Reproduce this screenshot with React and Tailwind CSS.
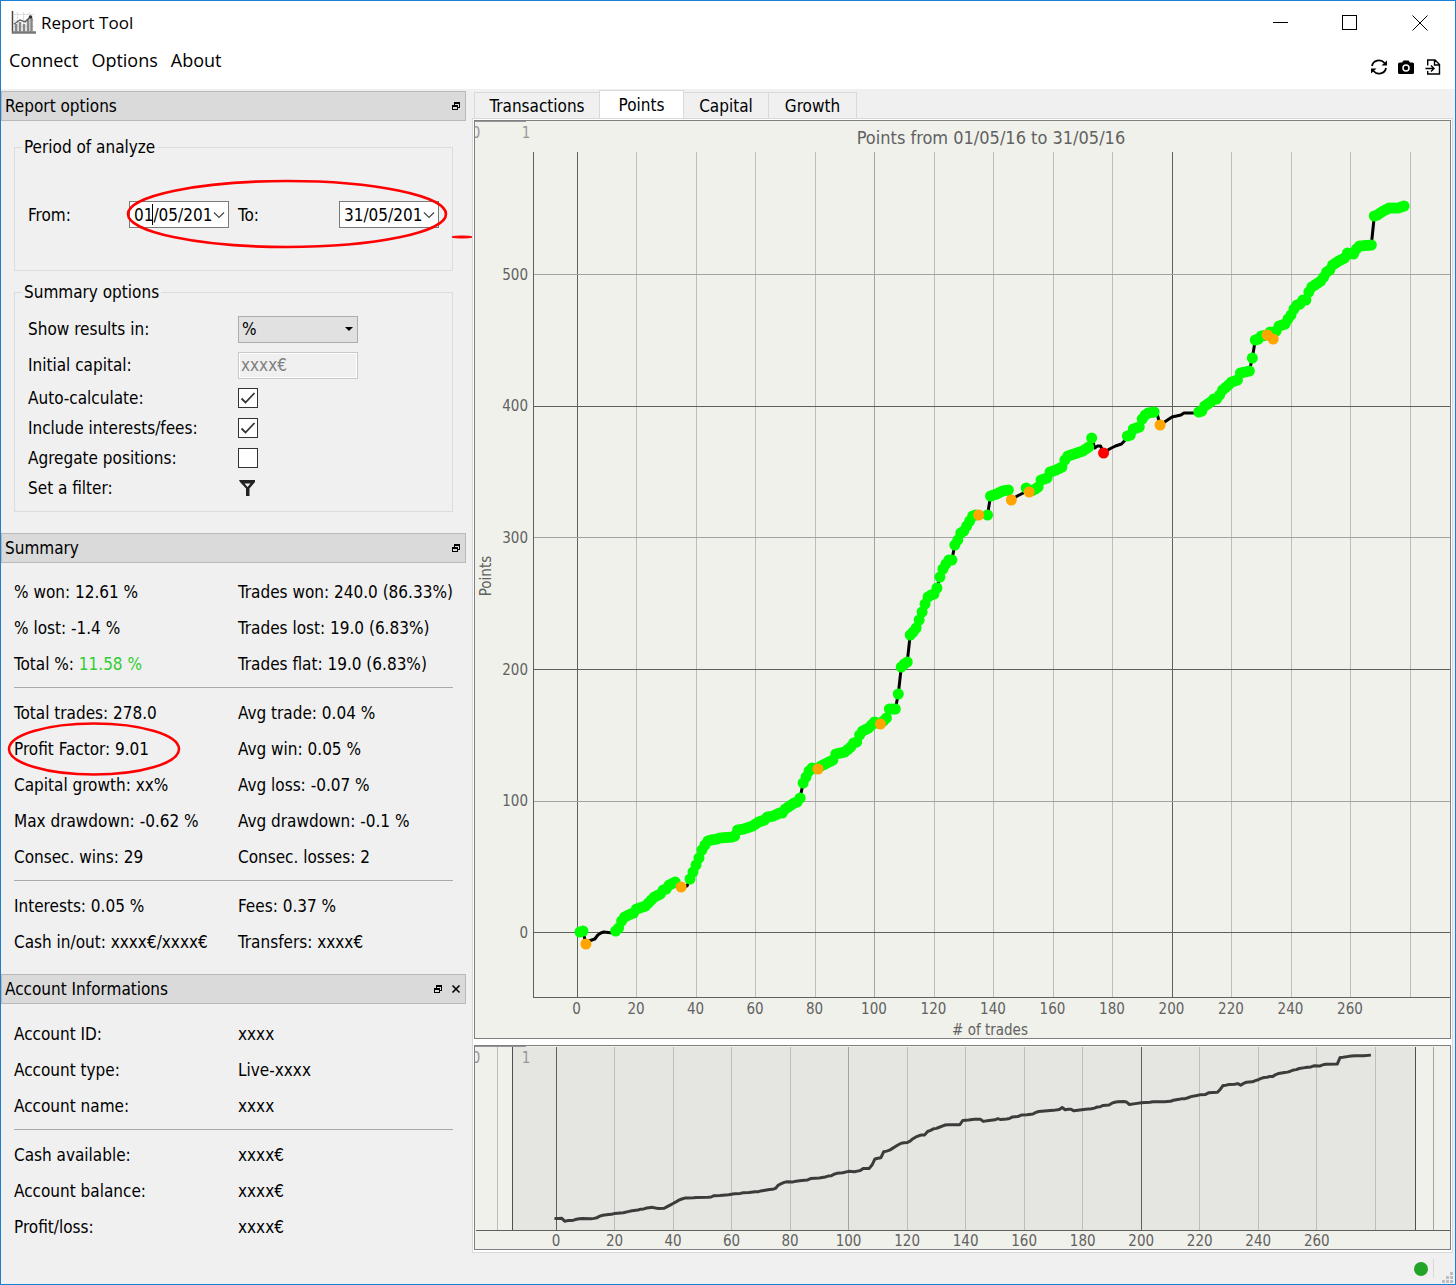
import React from 'react';

// [trade number, y of the equity curve in window pixels]
const curve = [
  [0, 932], [1, 932], [2, 931], [3, 944], [4, 941], [5, 940], [6, 939], [7, 935], [8, 933], [9, 932], [12, 933], [13, 931],
  [14, 928], [15, 921], [16, 917], [18, 914], [19, 913], [20, 909], [22, 907], [23, 906], [25, 900], [26, 897],
  [28, 894], [29, 890], [30, 889], [31, 885], [33, 882], [34, 885], [35, 887], [37, 886], [38, 879], [39, 872],
  [40, 865], [41, 858], [42, 850], [43, 845], [44, 841], [45, 840], [47, 839], [48, 838], [52, 837], [53, 836],
  [54, 830], [56, 829], [57, 828], [59, 826], [60, 824], [61, 822], [63, 820], [64, 817], [66, 816], [68, 813],
  [69, 813], [70, 809], [71, 807], [73, 803], [74, 802], [75, 798], [76, 783], [77, 777], [78, 771], [79, 768],
  [81, 769], [82, 766], [84, 763], [86, 760], [87, 754], [90, 752], [92, 747], [93, 743], [94, 742], [95, 735],
  [96, 731], [98, 728], [100, 722], [102, 724], [103, 721], [104, 718], [105, 709], [107, 709], [108, 694],
  [109, 667], [110, 664], [111, 662], [112, 635], [113, 632], [114, 628], [115, 620], [116, 612], [117, 604],
  [118, 597], [119, 595], [120, 594], [121, 588], [122, 577], [123, 569], [124, 564], [125, 560], [126, 560],
  [127, 545], [128, 540], [129, 533], [130, 531], [131, 526], [132, 521], [133, 516], [134, 515], [138, 515],
  [139, 496], [141, 494], [143, 491], [145, 490], [146, 500], [148, 496], [150, 493], [151, 488], [152, 492],
  [154, 489], [155, 487], [156, 480], [158, 478], [159, 472], [161, 470], [163, 467], [164, 460], [165, 456],
  [168, 453], [169, 452], [170, 451], [172, 447], [173, 438], [174, 448], [175, 446], [176, 446], [177, 453],
  [179, 449], [181, 446], [183, 444], [184, 441], [185, 436], [186, 435], [187, 429], [189, 427], [190, 419],
  [191, 415], [192, 413], [194, 412], [195, 414], [196, 425], [198, 421], [200, 417], [203, 415], [204, 413], [208, 413],
  [210, 411], [211, 406], [213, 402], [214, 399], [215, 399], [216, 395], [217, 390], [219, 385], [220, 382],
  [222, 380], [223, 373], [226, 371], [227, 358], [228, 340], [229, 339], [230, 336], [232, 335], [233, 332],
  [234, 339], [235, 331], [236, 326], [238, 324], [239, 319], [240, 315], [241, 309], [242, 305], [243, 304],
  [244, 300], [245, 300], [246, 292], [247, 287], [248, 285], [249, 283], [250, 281], [251, 277], [252, 272],
  [253, 270], [254, 265], [256, 261], [258, 258], [259, 253], [261, 254], [262, 249], [263, 246], [267, 245],
  [268, 216], [269, 215], [271, 211], [273, 208], [276, 208], [278, 206],
];

// Runs of winning trades, drawn as green dots
const winRuns = [
  [1, 2], [13, 33], [38, 80], [82, 101], [103, 134], [138, 145], [151, 151], [153, 173], [185, 194], [209, 231],
  [233, 233], [235, 278],
];

const markers = [
  [3, '#ffa500'], [35, '#ffa500'], [81, '#ffa500'], [102, '#ffa500'], [135, '#ffa500'], [146, '#ffa500'],
  [152, '#ffa500'], [177, '#ff0000'], [196, '#ffa500'], [232, '#ffa500'], [234, '#ffa500'],
];

const ticks = [0, 20, 40, 60, 80, 100, 120, 140, 160, 180, 200, 220, 240, 260, 280];

const mainX = (n) => 577 + n * 2.975;
const miniX = (n) => 556 + n * 2.926;
const miniY = (y) => 1218.7 - (932.5 - y) * 0.225;

function yAt(n) {
  const i = curve.findIndex((p) => p[0] >= n);
  const [n1, y1] = curve[i];
  if (n1 === n) return y1;
  const [n0, y0] = curve[i - 1];
  return y0 + ((y1 - y0) * (n - n0)) / (n1 - n0);
}

function gridColor(n) {
  if (n % 200 === 0) return '#5f5f5d';
  return n % 100 === 0 ? '#a3a4a1' : '#bdbeba';
}

function PointsChart() {
  const dots = winRuns.flatMap(([from, to]) => Array.from({ length: to - from + 1 }, (_, i) => from + i));
  return (
    <svg viewBox="475 121 975 917" className="block w-full h-auto bg-[#f0f1eb] text-[15px]" fill="#616161">
      <g shapeRendering="crispEdges">
        {ticks.map((n) => (
          <rect key={n} x={Math.floor(mainX(n) + 0.3)} y="152" width="1" height="845" fill={gridColor(n)} />
        ))}
        {[0, 100, 200, 300, 400, 500].map((v) => (
          <rect key={v} x="533" y={Math.floor(932.8 - v * 1.3164)} width="917" height="1" fill={gridColor(v)} />
        ))}
        <rect x="533" y="152" width="1" height="846" fill="#5f5f5d" />
        <rect x="533" y="997" width="917" height="1" fill="#5f5f5d" />
        <rect x="475" y="121" width="51" height="1" fill="#969696" />
      </g>
      <polyline
        points={curve.map(([n, y]) => `${mainX(n)},${y}`).join(' ')}
        fill="none"
        stroke="#000"
        strokeWidth="3"
        strokeLinejoin="round"
      />
      {dots.map((n) => (
        <circle key={n} cx={mainX(n)} cy={yAt(n)} r="5.5" fill="#00ff00" />
      ))}
      {markers.map(([n, color]) => (
        <circle key={n} cx={mainX(n)} cy={yAt(n)} r="5.5" fill={color} />
      ))}
      <text x="476" y="138" textAnchor="middle" fill="#969696">0</text>
      <text x="526" y="138" textAnchor="middle" fill="#969696">1</text>
      <text x="991" y="144" textAnchor="middle" className="text-[18px]">Points from 01/05/16 to 31/05/16</text>
      {[0, 100, 200, 300, 400, 500].map((v) => (
        <text key={v} x="528" y={938 - v * 1.3164} textAnchor="end">{v}</text>
      ))}
      {ticks.slice(0, 14).map((n) => (
        <text key={n} x={mainX(n) - 0.500} y="1014" textAnchor="middle">{n}</text>
      ))}
      <text x="990" y="1035" textAnchor="middle">{'# of trades'}</text>
      <text transform="translate(491 576) rotate(-90)" textAnchor="middle">Points</text>
    </svg>
  );
}

function OverviewChart() {
  return (
    <svg viewBox="475 1046 975 203" className="block w-full h-auto bg-[#f0f1eb] text-[15px]" fill="#616161">
      <g shapeRendering="crispEdges">
        <rect x="512" y="1047" width="903" height="183" fill="#e5e6e1" />
        {[-20, ...ticks, 300].map((n) => (
          <rect key={n} x={Math.floor(miniX(n))} y="1047" width="1" height="183" fill={gridColor(n)} />
        ))}
        <rect x="512" y="1047" width="1" height="183" fill="#4f4f4d" />
        <rect x="1415" y="1047" width="1" height="183" fill="#4f4f4d" />
        <rect x="476" y="1230" width="974" height="1" fill="#5f5f5d" />
        <rect x="475" y="1046" width="51" height="1" fill="#969696" />
      </g>
      <polyline
        points={curve.map(([n, y]) => `${miniX(n)},${miniY(y)}`).join(' ')}
        fill="none"
        stroke="#3c3c3b"
        strokeWidth="3"
        strokeLinejoin="round"
        strokeLinecap="square"
      />
      <text x="476" y="1063" textAnchor="middle" fill="#969696">0</text>
      <text x="526" y="1063" textAnchor="middle" fill="#969696">1</text>
      {ticks.slice(0, 14).map((n) => (
        <text key={n} x={miniX(n)} y="1246" textAnchor="middle">{n}</text>
      ))}
    </svg>
  );
}

function DockHeader({ title, closable }) {
  return (
    <header className="flex h-[30px] items-center gap-2 border border-[#b9b9b9] bg-[#dadada] pl-[3px] pr-1">
      <h2 className="flex-1">{title}</h2>
      <button type="button" aria-label={`Float ${title}`}>
        <svg width="10" height="10" viewBox="0 0 10 10" shapeRendering="crispEdges">
          <path d="M3 1h6v6H7V6h1V3H4v1H3zM1 4h6v5H1zM2 6v2h4V6z" fillRule="evenodd" />
        </svg>
      </button>
      {closable && (
        <button type="button" aria-label={`Close ${title}`}>
          <svg width="10" height="10" viewBox="0 0 10 10" stroke="#000" strokeWidth="1.6">
            <path d="M1.5 1.5l7 7M8.5 1.5l-7 7" />
          </svg>
        </button>
      )}
    </header>
  );
}

function DateField({ id, value, focused }) {
  return (
    <div className="relative flex h-[27px] w-[100px] items-center border border-[#7a7a7a] bg-white pl-1 pr-[3px]">
      <input id={id} defaultValue={value} className="w-full min-w-0 bg-transparent outline-none" />
      {focused && <span className="absolute left-[22px] top-[2px] h-[21px] w-px bg-black" />}
      <svg width="12" height="8" viewBox="0 0 12 8" fill="none" stroke="#444" className="shrink-0">
        <path d="M1 1.5l5 5 5-5" strokeWidth="1.2" />
      </svg>
    </div>
  );
}

function CheckRow({ id, label, checked }) {
  return (
    <div className="flex h-[30px] items-center">
      <label htmlFor={id} className="w-[210px]">{label}</label>
      <span className="relative flex">
        <input
          id={id}
          type="checkbox"
          defaultChecked={checked}
          className="peer size-5 appearance-none border border-[#333] bg-white"
        />
        <svg viewBox="0 0 20 20" fill="none" stroke="#333" strokeWidth="1.8" className="pointer-events-none absolute inset-0 hidden size-5 peer-checked:block">
          <path d="M3.5 10.5l4 4 9-9.5" />
        </svg>
      </span>
    </div>
  );
}

function Rows({ rows }) {
  return rows.map(([left, right]) => (
    <div key={left} className="flex h-9 items-center">
      <span className="w-[224px]">{left}</span>
      <span className="whitespace-nowrap">{right}</span>
    </div>
  ));
}

const Rule = () => <hr className="mb-[7px] mt-[5px] border-[#a9a9a9]" />;

function ReportOptions() {
  return (
    <section>
      <DockHeader title="Report options" />
      <div className="relative flex flex-col gap-[11px] px-[13px] pb-[21px] pt-4">
        <fieldset className="border border-[#dcdcdc] px-[13px] pb-[42px] pt-[44px]">
          <legend className="-ml-[6px] px-[2px] leading-5">Period of analyze</legend>
          <div className="flex items-center">
            <label htmlFor="from" className="w-[101px]">From:</label>
            <DateField id="from" value="01/05/201" focused />
            <label htmlFor="to" className="w-[110px] pl-[9px]">To:</label>
            <DateField id="to" value="31/05/201" />
          </div>
        </fieldset>

        <fieldset className="border border-[#dcdcdc] px-[13px] pb-2 pt-[9px]">
          <legend className="-ml-[6px] px-[2px] leading-5">Summary options</legend>
          <div className="flex h-9 items-center">
            <label htmlFor="unit" className="w-[210px]">Show results in:</label>
            <span className="relative flex">
              <select id="unit" className="h-[27px] w-[120px] appearance-none border border-[#adadad] bg-[#e1e1e1] pl-[3px]">
                <option>%</option>
              </select>
              <svg viewBox="0 0 8 4" className="pointer-events-none absolute right-[5px] top-[11px] h-1 w-2">
                <path d="M0 0h8L4 4z" />
              </svg>
            </span>
          </div>
          <div className="flex h-9 items-center">
            <label htmlFor="capital" className="w-[210px]">Initial capital:</label>
            <input
              id="capital"
              disabled
              defaultValue="xxxx€"
              className="h-[27px] w-[120px] border border-[#c8c8c8] bg-[#f0f0f0] px-[2px] text-[#808080] outline-1 -outline-offset-2 outline-white"
            />
          </div>
          <CheckRow id="auto" label="Auto-calculate:" checked />
          <CheckRow id="fees" label="Include interests/fees:" checked />
          <CheckRow id="agregate" label="Agregate positions:" />
          <div className="flex h-[30px] items-center">
            <span className="w-[210px]">Set a filter:</span>
            <button type="button" aria-label="Set a filter" className="pl-[1px]">
              <svg width="16" height="16" viewBox="0 0 16 16" fill="#222" fillRule="evenodd">
                <path d="M0 0h16v2l-5.500 6.500V16h-3.500V8.500L1 2zM5.500 3.500l3 3.500 3-3.500z" />
              </svg>
            </button>
          </div>
        </fieldset>

        {/* Hand-drawn highlight round the dates */}
        <svg viewBox="0 0 350 72" fill="none" stroke="#f00" strokeWidth="2.6" className="pointer-events-none absolute left-[123px] top-[57px] h-[72px] w-[350px]">
          <ellipse cx="163" cy="36" rx="159" ry="33" />
          <ellipse cx="338" cy="59" rx="10" ry="1" strokeWidth="1" fill="#f00" />
        </svg>
      </div>
    </section>
  );
}

function Summary() {
  return (
    <section>
      <DockHeader title="Summary" />
      <div className="px-[13px] pb-[14px] pt-[11px]">
        <Rows
          rows={[
            ['% won: 12.61 %', 'Trades won: 240.0 (86.33%)'],
            ['% lost: -1.4 %', 'Trades lost: 19.0 (6.83%)'],
          ]}
        />
        <div className="flex h-9 items-center">
          <span className="w-[224px]">Total %: <span className="text-[#32cd32]">11.58 %</span></span>
          <span>Trades flat: 19.0 (6.83%)</span>
        </div>
        <Rule />
        <Rows rows={[['Total trades: 278.0', 'Avg trade: 0.04 %']]} />
        <div className="relative flex h-9 items-center">
          <span className="w-[224px]">Profit Factor: 9.01</span>
          <span>Avg win: 0.05 %</span>
          <svg viewBox="0 0 174 54" fill="none" stroke="#f00" strokeWidth="2.6" className="pointer-events-none absolute -left-[7px] -top-[9px] h-[54px] w-[174px]">
            <ellipse cx="87" cy="27" rx="85" ry="25.5" />
          </svg>
        </div>
        <Rows
          rows={[
            ['Capital growth: xx%', 'Avg loss: -0.07 %'],
            ['Max drawdown: -0.62 %', 'Avg drawdown: -0.1 %'],
            ['Consec. wins: 29', 'Consec. losses: 2'],
          ]}
        />
        <Rule />
        <Rows
          rows={[
            ['Interests: 0.05 %', 'Fees: 0.37 %'],
            ['Cash in/out: xxxx€/xxxx€', 'Transfers: xxxx€'],
          ]}
        />
      </div>
    </section>
  );
}

function AccountInformations() {
  return (
    <section>
      <DockHeader title="Account Informations" closable />
      <div className="px-[13px] pt-[12px]">
        <Rows rows={[['Account ID:', 'xxxx'], ['Account type:', 'Live-xxxx'], ['Account name:', 'xxxx']]} />
        <Rule />
        <Rows rows={[['Cash available:', 'xxxx€'], ['Account balance:', 'xxxx€'], ['Profit/loss:', 'xxxx€']]} />
      </div>
    </section>
  );
}

function TitleBar() {
  return (
    <div className="flex h-[43px] items-center pl-[10px] pr-[27px]">
      <svg width="25" height="25" viewBox="0 0 25 25" fill="none" className="mr-[5px]">
        <path d="M6.5 2v20M12.5 2v20M18.5 2v20M3 4.500h20M3 10.500h20M3 16.500h20" stroke="#ddd" />
        <path d="M1.500 1v22.500" stroke="#444" strokeWidth="1.500" />
        <path d="M1 22.500h24" stroke="#777" strokeWidth="2.500" />
        <path d="M5 14v8M9 12v10M13 14v8M17 9v13M20.500 8v14" stroke="#888" strokeWidth="2.500" />
        <path d="M3 14l6-4 5 2 5-5" stroke="#555" strokeWidth="1.200" />
        <circle cx="19.500" cy="7" r="1.800" fill="#333" />
      </svg>
      <h1 className="flex-1 text-[17px]">Report Tool</h1>
      <div className="flex items-center gap-[54px]">
        <button type="button" aria-label="Minimize">
          <svg width="16" height="16" viewBox="0 0 16 16" stroke="#000" shapeRendering="crispEdges"><path d="M1 7.500h15" /></svg>
        </button>
        <button type="button" aria-label="Maximize">
          <svg width="16" height="16" viewBox="0 0 16 16" fill="none" stroke="#000" shapeRendering="crispEdges"><path d="M.5.500h14v14H.500z" /></svg>
        </button>
        <button type="button" aria-label="Close">
          <svg width="16" height="16" viewBox="0 0 16 16" stroke="#000"><path d="M.5.500l15 15M15.500.500l-15 15" /></svg>
        </button>
      </div>
    </div>
  );
}

function MenuBar() {
  return (
    <div className="flex h-[45px] items-start justify-between pl-2 pr-[14px]">
      <nav className="flex gap-[13px] pt-[6px] text-[18px]">
        <button type="button">Connect</button>
        <button type="button">Options</button>
        <button type="button">About</button>
      </nav>
      <div className="flex gap-[11px] pt-[15px]">
        <button type="button" aria-label="Refresh">
          <svg width="16" height="16" viewBox="0 0 16 16" fill="none" stroke="#000" strokeWidth="1.8">
            <path d="M1 7A7 6.500 0 0 1 13.500 4M15 9A7 6.500 0 0 1 2.500 12" />
            <path d="M16 1.500v5h-5.500zM0 14.500v-5h5.500z" fill="#000" stroke="none" />
          </svg>
        </button>
        <button type="button" aria-label="Screenshot">
          <svg width="16" height="16" viewBox="0 0 16 16">
            <path d="M1.500 3.500H4L5.500 1.500h5L12 3.500h2.500q1.500 0 1.500 1.500v8.500q0 1.500-1.500 1.500h-13Q0 15 0 13.500V5q0-1.500 1.500-1.500z" />
            <circle cx="8" cy="9" r="3" fill="none" stroke="#fff" strokeWidth="1.500" />
          </svg>
        </button>
        <button type="button" aria-label="Export">
          <svg width="16" height="16" viewBox="0 0 16 16" fill="none" stroke="#000" strokeWidth="1.400">
            <path d="M2.700 6.500V1H10l4.500 4.500V15H2.700v-3M9.500 1v5h5M.5 9.500h8M6 6.500l3 3-3 3" />
          </svg>
        </button>
      </div>
    </div>
  );
}

export default function App() {
  return (
    <div className="flex min-h-screen flex-col border border-[#1a80d4] bg-[#f0f0f0] font-['DejaVu_Sans_Condensed','Noto_Sans',sans-serif] text-[17px] leading-5 text-black">
      <div className="bg-white font-['Open_Sans','Noto_Sans',sans-serif]">
        <TitleBar />
        <MenuBar />
      </div>

      <main className="flex flex-1 gap-[6px] pr-[2px]">
        <aside className="w-[465px] shrink-0 pt-[2px]">
          <ReportOptions />
          <Summary />
          <AccountInformations />
        </aside>

        <div className="min-w-0 flex-1">
          <div role="tablist" className="flex h-[29px] items-end pl-[2px] pt-[1px]">
            <button type="button" role="tab" className="h-[26px] w-[125px] border border-b-0 border-r-0 border-[#d9d9d9]">Transactions</button>
            <button type="button" role="tab" aria-selected="true" className="h-7 w-[85px] border border-b-0 border-[#d9d9d9] bg-white">Points</button>
            <button type="button" role="tab" className="h-[26px] w-[85px] border border-b-0 border-l-0 border-[#d9d9d9]">Capital</button>
            <button type="button" role="tab" className="h-[26px] w-[88px] border border-b-0 border-l-0 border-[#d9d9d9]">Growth</button>
          </div>
          <div className="flex flex-col gap-[6px] border border-[#d9d9d9] bg-white px-[1px] pb-[2px] pt-[1px]">
            <div className="border border-[#7f7f7f]">
              <PointsChart />
            </div>
            <div className="border border-[#7f7f7f]">
              <OverviewChart />
            </div>
          </div>
        </div>
      </main>

      <footer className="flex h-[31px] items-center justify-end pr-[1px]">
        <span className="size-[14px] rounded-full bg-[#22a428]" />
        <span className="ml-[5px] h-[19px] w-px bg-[#d9d9d9]" />
        <svg width="12" height="12" viewBox="0 0 12 12" fill="#bfbfbf" className="ml-2 self-end">
          <path d="M8 0h3v3H8zM4 4h3v3H4zM8 4h3v3H8zM0 8h3v3H0zM4 8h3v3H4zM8 8h3v3H8z" />
        </svg>
      </footer>
    </div>
  );
}
